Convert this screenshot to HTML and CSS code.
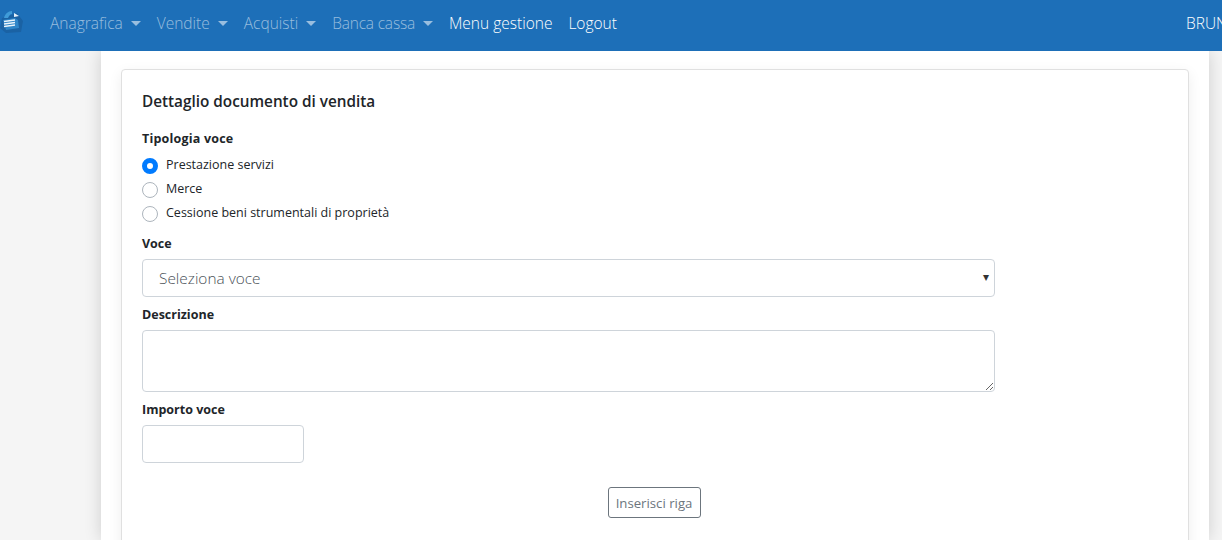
FILE: index.html
```html
<!DOCTYPE html>
<html lang="it">
<head>
<meta charset="utf-8">
<title>Dettaglio documento di vendita</title>
<link rel="stylesheet" href="styles.css">
</head>
<body>
<div class="page">
  <nav class="navbar">
    <svg class="logo" viewBox="0 0 24 24" width="24" height="24" aria-hidden="true">
      <path d="M2 8 L17 3 L23 11 L21 22 L6 23 L0 18 Z" fill="#1a62a4"/>
      <path d="M4 8 C5 4 8 1 12 1 L12 4 C10 4 9 6 8 8 Z" fill="#3f9bd8"/>
      <path d="M14 3 L19 6 L14 7 Z" fill="#e6f2fb"/>
      <path d="M3 10 L15 8 L18 10 L19 18 L6 20 Z" fill="#2f86c9"/>
      <path d="M4 11.500 L15 10 M4 14 L15 12.500 M4 16.500 L15 15" stroke="#eaf4fb" stroke-width="1.500" fill="none"/>
    </svg>
    <ul class="menu">
      <li class="item caret">Anagrafica</li>
      <li class="item caret">Vendite</li>
      <li class="item caret">Acquisti</li>
      <li class="item caret tight">Banca cassa</li>
      <li class="item active">Menu gestione</li>
      <li class="item active">Logout</li>
    </ul>
    <div class="user">BRUNO</div>
  </nav>
  <main class="wrap">
    <section class="card">
      <h1 class="title">Dettaglio documento di vendita</h1>
      <form class="form">
        <div class="group group-radios">
          <div class="label">Tipologia voce</div>
          <div class="radios">
            <label class="radio"><span class="dot checked"></span>Prestazione servizi</label>
            <label class="radio"><span class="dot"></span>Merce</label>
            <label class="radio"><span class="dot"></span>Cessione beni strumentali di proprietà</label>
          </div>
        </div>
        <div class="group">
          <div class="label">Voce</div>
          <div class="select">Seleziona voce<span class="arrow">▾</span></div>
        </div>
        <div class="group">
          <div class="label">Descrizione</div>
          <textarea class="area"></textarea>
        </div>
        <div class="group">
          <div class="label">Importo voce</div>
          <input class="input" type="text">
        </div>
      </form>
      <div class="actions"><button class="btn" type="button">Inserisci riga</button></div>
    </section>
  </main>
</div>
</body>
</html>
```
FILE: styles.css
```css
* { box-sizing: border-box; }
html, body { margin: 0; background: #fff; }
body { font-family: "Open Sans", "Noto Sans", sans-serif; color: #212529; }
.page { height: 540px; overflow: hidden; background: #f5f5f5; }
.navbar { height: 51px; padding-bottom: 6px; background: #1d6fb8; display: flex; align-items: center; position: relative; z-index: 2; }
.logo { flex: none; width: 24px; height: 24px; margin-top: -1px; }
.menu { list-style: none; margin: 0 0 0 26px; padding: 0; display: flex; gap: 16px; }
.item { font-size: 15.500px; font-weight: 300; line-height: 22px; color: rgba(255,255,255,.55); white-space: nowrap; }
.item.active { color: #fff; }
.tight { letter-spacing: -.2px; }
.caret::after { content: ""; display: inline-block; margin-left: 8px; vertical-align: 3px; border-top: 5px solid; border-left: 5px solid transparent; border-right: 5px solid transparent; }
.user { margin-left: auto; width: 36px; overflow: hidden; color: #fff; font-size: 15.500px; font-weight: 300; white-space: nowrap; }
.wrap { width: 1108px; height: 489px; margin-left: 101px; padding: 18px 20px 0; background: #fff; box-shadow: 0 0 16px rgba(0,0,0,.16); }
.card { height: 600px; padding: 20px; background: #fff; border: 1px solid #e0e0e0; border-radius: 4px; box-shadow: 0 4px 14px rgba(0,0,0,.07); }
.title { margin: 1px 0 18px; font-size: 15.300px; line-height: 20px; font-weight: 600; color: #212529; }
.form { width: 853px; }
.group { margin-bottom: 8px; }
.group-radios { margin-bottom: 9px; }
.radios { margin-top: -1px; }
.label { font-size: 12.500px; line-height: 20px; font-weight: 700; margin-bottom: 5px; }
.group-radios .label { letter-spacing: .2px; }
.radio { display: flex; align-items: center; height: 24px; padding-bottom: 2px; font-size: 12.500px; font-weight: 400; }
.dot { width: 16px; height: 16px; margin: 4px 8px 0 0; border: 1px solid #adb5bd; border-radius: 50%; background: #fff; flex: none; }
.dot.checked { border: 5px solid #007bff; background: #fff; }
.select { position: relative; height: 38px; padding: 0 16px; display: flex; align-items: center; border: 1px solid #ced4da; border-radius: 4px; font-size: 15.400px; font-weight: 300; color: #495057; }
.arrow { position: absolute; right: 5px; top: 8px; font-size: 12px; color: #333; }
.area { display: block; width: 100%; height: 62px; border: 1px solid #ced4da; border-radius: 4px; background: #fff; }
.input { display: block; width: 162px; height: 38px; border: 1px solid #ced4da; border-radius: 4px; background: #fff; }
.actions { width: 1024px; display: flex; justify-content: center; margin-top: 24px; }
.btn { height: 31px; width: 93px; padding: 0; background: #fff; border: 1px solid #6c757d; border-radius: 3px; color: #6c757d; font-family: inherit; font-size: 13.200px; font-weight: 400; }
```
